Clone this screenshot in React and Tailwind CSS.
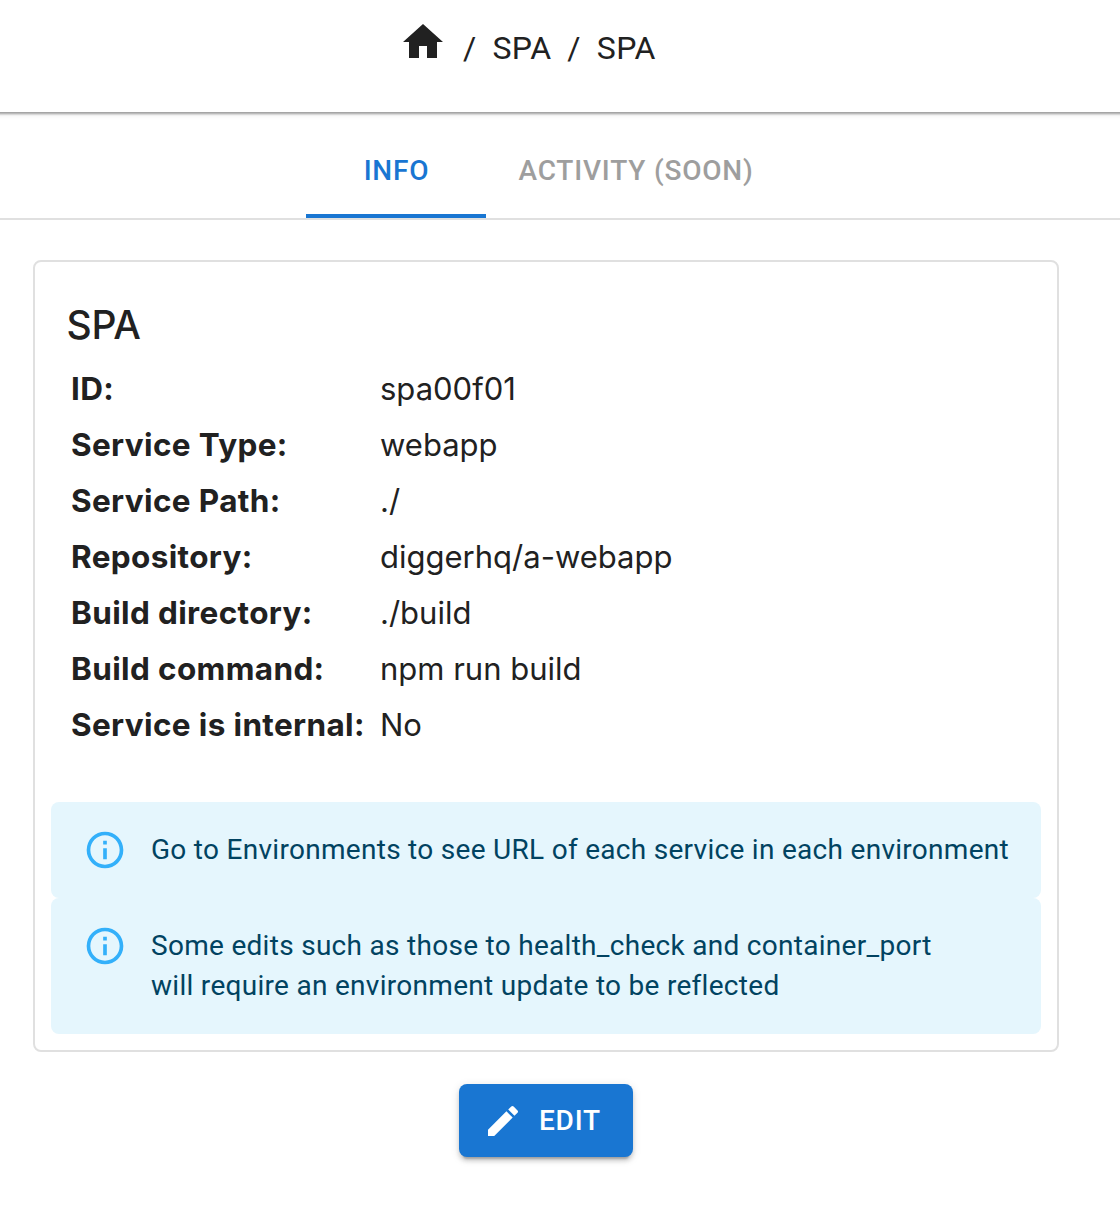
const rows = [
  ['ID:', 'spa00f01'],
  ['Service Type:', 'webapp'],
  ['Service Path:', './'],
  ['Repository:', 'diggerhq/a-webapp'],
  ['Build directory:', './build'],
  ['Build command:', 'npm run build'],
  ['Service is internal:', 'No'],
];

function Icon({ d, className }) {
  return (
    <svg viewBox="0 0 24 24" fill="currentColor" className={className}>
      <path d={d} />
    </svg>
  );
}

function Notice({ lines }) {
  return (
    <div className="flex rounded-lg bg-[#e5f6fd] pl-8 pt-7 text-[#014361]">
      <Icon
        className="h-11 w-11 shrink-0 -mt-[2px] text-[#33b0fa]"
        d="M11,9H13V7H11M12,20C7.59,20 4,16.41 4,12C4,7.59 7.59,4 12,4C16.41,4 20,7.59 20,12C20,16.41 16.41,20 12,20M12,2A10,10 0 0,0 2,12A10,10 0 0,0 12,22A10,10 0 0,0 22,12A10,10 0 0,0 12,2M11,17H13V11H11V17Z"
      />
      <div className="ml-6 pb-7 font-['Roboto',sans-serif] text-[28px] leading-10 tracking-[0.29px]">
        {lines.map((l) => (
          <div key={l} className="whitespace-nowrap">{l}</div>
        ))}
      </div>
    </div>
  );
}

export default function App() {
  return (
    <div className="h-[1230px] w-[1120px] overflow-hidden bg-white font-['Inter',sans-serif] text-[#212121]">
      <header className="-mx-4 flex h-28 items-start pl-[415px] pt-[18px] shadow-[0_4px_2px_-2px_rgba(0,0,0,0.2),0_2px_2px_rgba(0,0,0,0.14),0_2px_6px_rgba(0,0,0,0.12)]">
        <Icon className="h-12 w-12" d="M10 20v-6h4v6h5v-8h3L12 3 2 12h3v8z" />
        <div className="ml-4 flex gap-4 pt-1.5 font-['Roboto',sans-serif] text-[32px] leading-12 tracking-[0.3px]">
          <span>/</span><span>SPA</span><span>/</span><span>SPA</span>
        </div>
      </header>
      <nav className="flex h-[108px] border-b-2 border-[#e0e0e0] pl-[306px] font-['Roboto',sans-serif] text-[28px] font-medium leading-[35px] tracking-[0.8px]">
        <div className="w-[180px] border-b-4 border-[#1976d2] pl-px pt-[41px] text-center text-[#1976d2]">INFO</div>
        <div className="ml-8 pl-[0.5px] pt-[41px] text-[#9e9e9e]">ACTIVITY (SOON)</div>
      </nav>
      <main className="flex flex-col items-center pl-[33px] pr-[61px] pt-10">
        <section className="h-[792px] w-[1026px] rounded-lg border-2 border-[#e0e0e0] px-4">
          <h1 className="pl-[15.5px] pt-[31px] text-[39px] font-medium leading-[64px] tracking-[-0.2px]">SPA</h1>
          <dl className="h-[445px] pl-5 pt-[4px] text-[31px] leading-14">
            {rows.map(([k, v]) => (
              <div key={k} className="flex">
                <dt className="w-[309px] whitespace-nowrap text-[31.5px] font-bold tracking-[0.36px]">{k}</dt>
                <dd>{v}</dd>
              </div>
            ))}
          </dl>
          <Notice lines={['Go to Environments to see URL of each service in each environment']} />
          <Notice lines={['Some edits such as those to health_check and container_port', 'will require an environment update to be reflected']} />
        </section>
        <button className="mt-8 flex h-[73px] w-[174px] items-center rounded-lg bg-[#1976d2] pl-6 font-['Roboto',sans-serif] text-[28px] font-medium tracking-[0.8px] text-white shadow-[0_6px_2px_-4px_rgba(0,0,0,0.2),0_4px_4px_rgba(0,0,0,0.14),0_2px_10px_rgba(0,0,0,0.12)]">
          <Icon className="h-10 w-10" d="M3 17.25V21h3.75L17.81 9.94l-3.75-3.75L3 17.25zM20.71 7.04c.39-.39.39-1.02 0-1.41l-2.34-2.34a.9959.9959 0 0 0-1.41 0l-1.83 1.83 3.75 3.75 1.83-1.83z" />
          <span className="ml-4">EDIT</span>
        </button>
      </main>
    </div>
  );
}
